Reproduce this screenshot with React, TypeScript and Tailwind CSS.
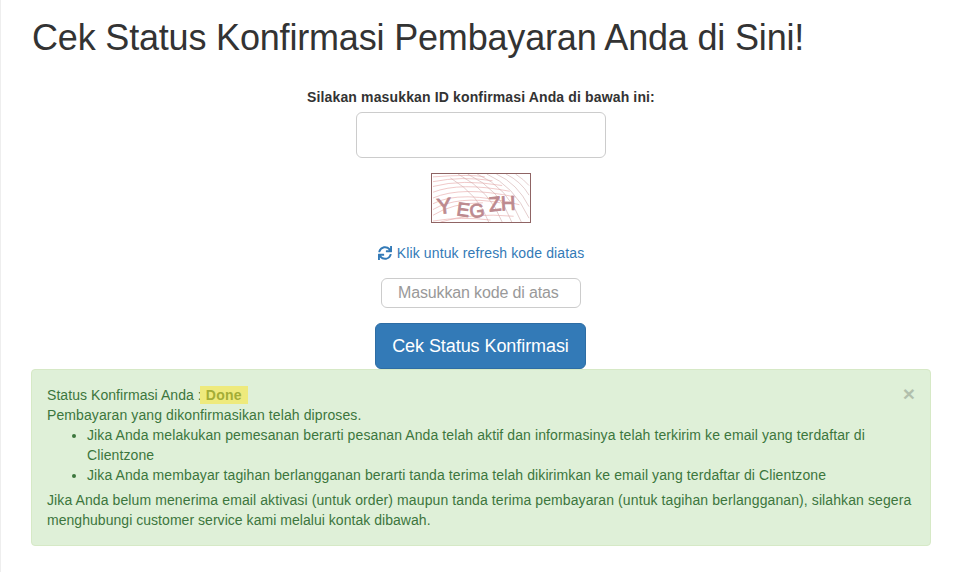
import { FaSync } from 'react-icons/fa'

const LEFT_LINES = [
  'M0 8 Q30 2 62 7',
  'M0 13 Q30 5 72 12',
  'M0 19 Q28 8 80 18',
  'M0 25 Q30 12 86 24',
  'M0 31 Q28 16 90 32',
  'M0 37 Q26 22 70 30',
  'M0 43 Q20 30 52 30',
  'M0 3 Q40 0 54 3',
]

const RIGHT_LINES = [
  'M26 0 Q60 18 72 50',
  'M36 0 Q70 16 82 50',
  'M46 0 Q78 14 92 50',
  'M56 0 Q84 12 100 46',
  'M66 0 Q88 10 100 34',
  'M76 0 Q92 8 100 22',
  'M86 0 Q95 6 100 12',
  'M18 4 Q48 22 58 50',
]

const BOTTOM_LINES = ['M0 49 Q30 44 60 48', 'M8 50 Q40 40 84 44']

const CAPTCHA_LETTERS = [
  { ch: 'Y', x: 5, y: 42, r: -6, size: 23 },
  { ch: 'E', x: 24, y: 43, r: 8, size: 20 },
  { ch: 'G', x: 39, y: 46, r: -8, size: 20 },
  { ch: 'Z', x: 59, y: 39, r: -6, size: 21 },
  { ch: 'H', x: 71, y: 38, r: -3, size: 21 },
]

function Captcha() {
  return (
    <svg width="100" height="50" viewBox="0 0 100 50" className="block border border-[#8f6464] bg-white">
      {LEFT_LINES.map(d => (
        <path key={d} d={d} fill="none" stroke="#e8aeae" strokeWidth="0.7" />
      ))}
      {RIGHT_LINES.map(d => (
        <path key={d} d={d} fill="none" stroke="#cfaaaa" strokeWidth="0.6" />
      ))}
      {BOTTOM_LINES.map(d => (
        <path key={d} d={d} fill="none" stroke="#e8aeae" strokeWidth="0.7" />
      ))}
      {CAPTCHA_LETTERS.map(l => (
        <text
          key={l.ch}
          x={l.x}
          y={l.y}
          fontSize={l.size}
          fontFamily="Liberation Sans, sans-serif"
          fill="#bd8a8f"
          stroke="#bd8a8f"
          strokeWidth="0.9"
          transform={`rotate(${l.r} ${l.x} ${l.y})`}
        >
          {l.ch}
        </text>
      ))}
    </svg>
  )
}

export default function App() {
  return (
    <div className="min-h-[572px] border-l border-[#eeeeee] bg-white pl-[30px] pr-[26px] font-['Liberation_Sans',Arial,sans-serif] text-[14px] leading-[20px] text-[#333333]">
      <h1 className="pl-[1px] pt-[18px] text-[36px] font-normal leading-[39.6px] tracking-[-0.18px]">
        Cek Status Konfirmasi Pembayaran Anda di Sini!
      </h1>

      <div className="flex flex-col items-center">
        <label className="mt-[29px] font-bold tracking-[0.14px]">Silakan masukkan ID konfirmasi Anda di bawah ini:</label>
        <input
          type="text"
          className="mt-[5px] h-[46px] w-[250px] rounded-[6px] border border-[#cccccc] bg-white px-4 text-[18px] outline-none"
        />

        <div className="mt-[15px]">
          <Captcha />
        </div>

        <a className="mt-[20px] flex items-center gap-[5px] tracking-[0.13px] text-[#337ab7]">
          <FaSync className="h-[14px] w-[14px]" />
          Klik untuk refresh kode diatas
        </a>

        <input
          type="text"
          placeholder="Masukkan kode di atas"
          className="mt-[15px] h-[30px] w-[200px] rounded-[6px] border border-[#cccccc] bg-white px-4 text-[16px] tracking-[-0.14px] text-[#555555] outline-none placeholder:text-[#999999]"
        />

        <button className="mt-[15px] ml-[-1px] h-[46px] w-[211px] rounded-[6px] border border-[#2e6da4] bg-[#337ab7] text-[18px] leading-[24px] tracking-[-0.07px] text-white">
          Cek Status Konfirmasi
        </button>
      </div>

      <div className="relative rounded-[4px] border border-[#d6e9c6] bg-[#dff0d8] p-[15px] tracking-[0.1px] text-[#3c763d]">
        <button className="absolute right-[15px] top-[13px] text-[21px] font-bold leading-[21px] text-black opacity-20">
          ×
        </button>
        <div>
          <span className="tracking-[0.06px]">Status Konfirmasi Anda :</span>
          <span className="ml-[-2px] mt-[1px] inline-block h-[18px] bg-[#eeea7c] px-[6px] align-top font-bold leading-[18px] tracking-[0.3px] text-[#a3ad36]">
            Done
          </span>
        </div>
        <div>Pembayaran yang dikonfirmasikan telah diproses.</div>
        <ul className="list-disc pl-[40px]">
          <li>
            Jika Anda melakukan pemesanan berarti pesanan Anda telah aktif dan informasinya telah terkirim ke email yang
            terdaftar di Clientzone
          </li>
          <li>Jika Anda membayar tagihan berlangganan berarti tanda terima telah dikirimkan ke email yang terdaftar di Clientzone</li>
        </ul>
        <p className="mt-[5px]">
          Jika Anda belum menerima email aktivasi (untuk order) maupun tanda terima pembayaran (untuk tagihan
          berlangganan), silahkan segera{' '}
          <span className="tracking-[0.04px]">menghubungi customer service kami melalui kontak dibawah.</span>
        </p>
      </div>
    </div>
  )
}
